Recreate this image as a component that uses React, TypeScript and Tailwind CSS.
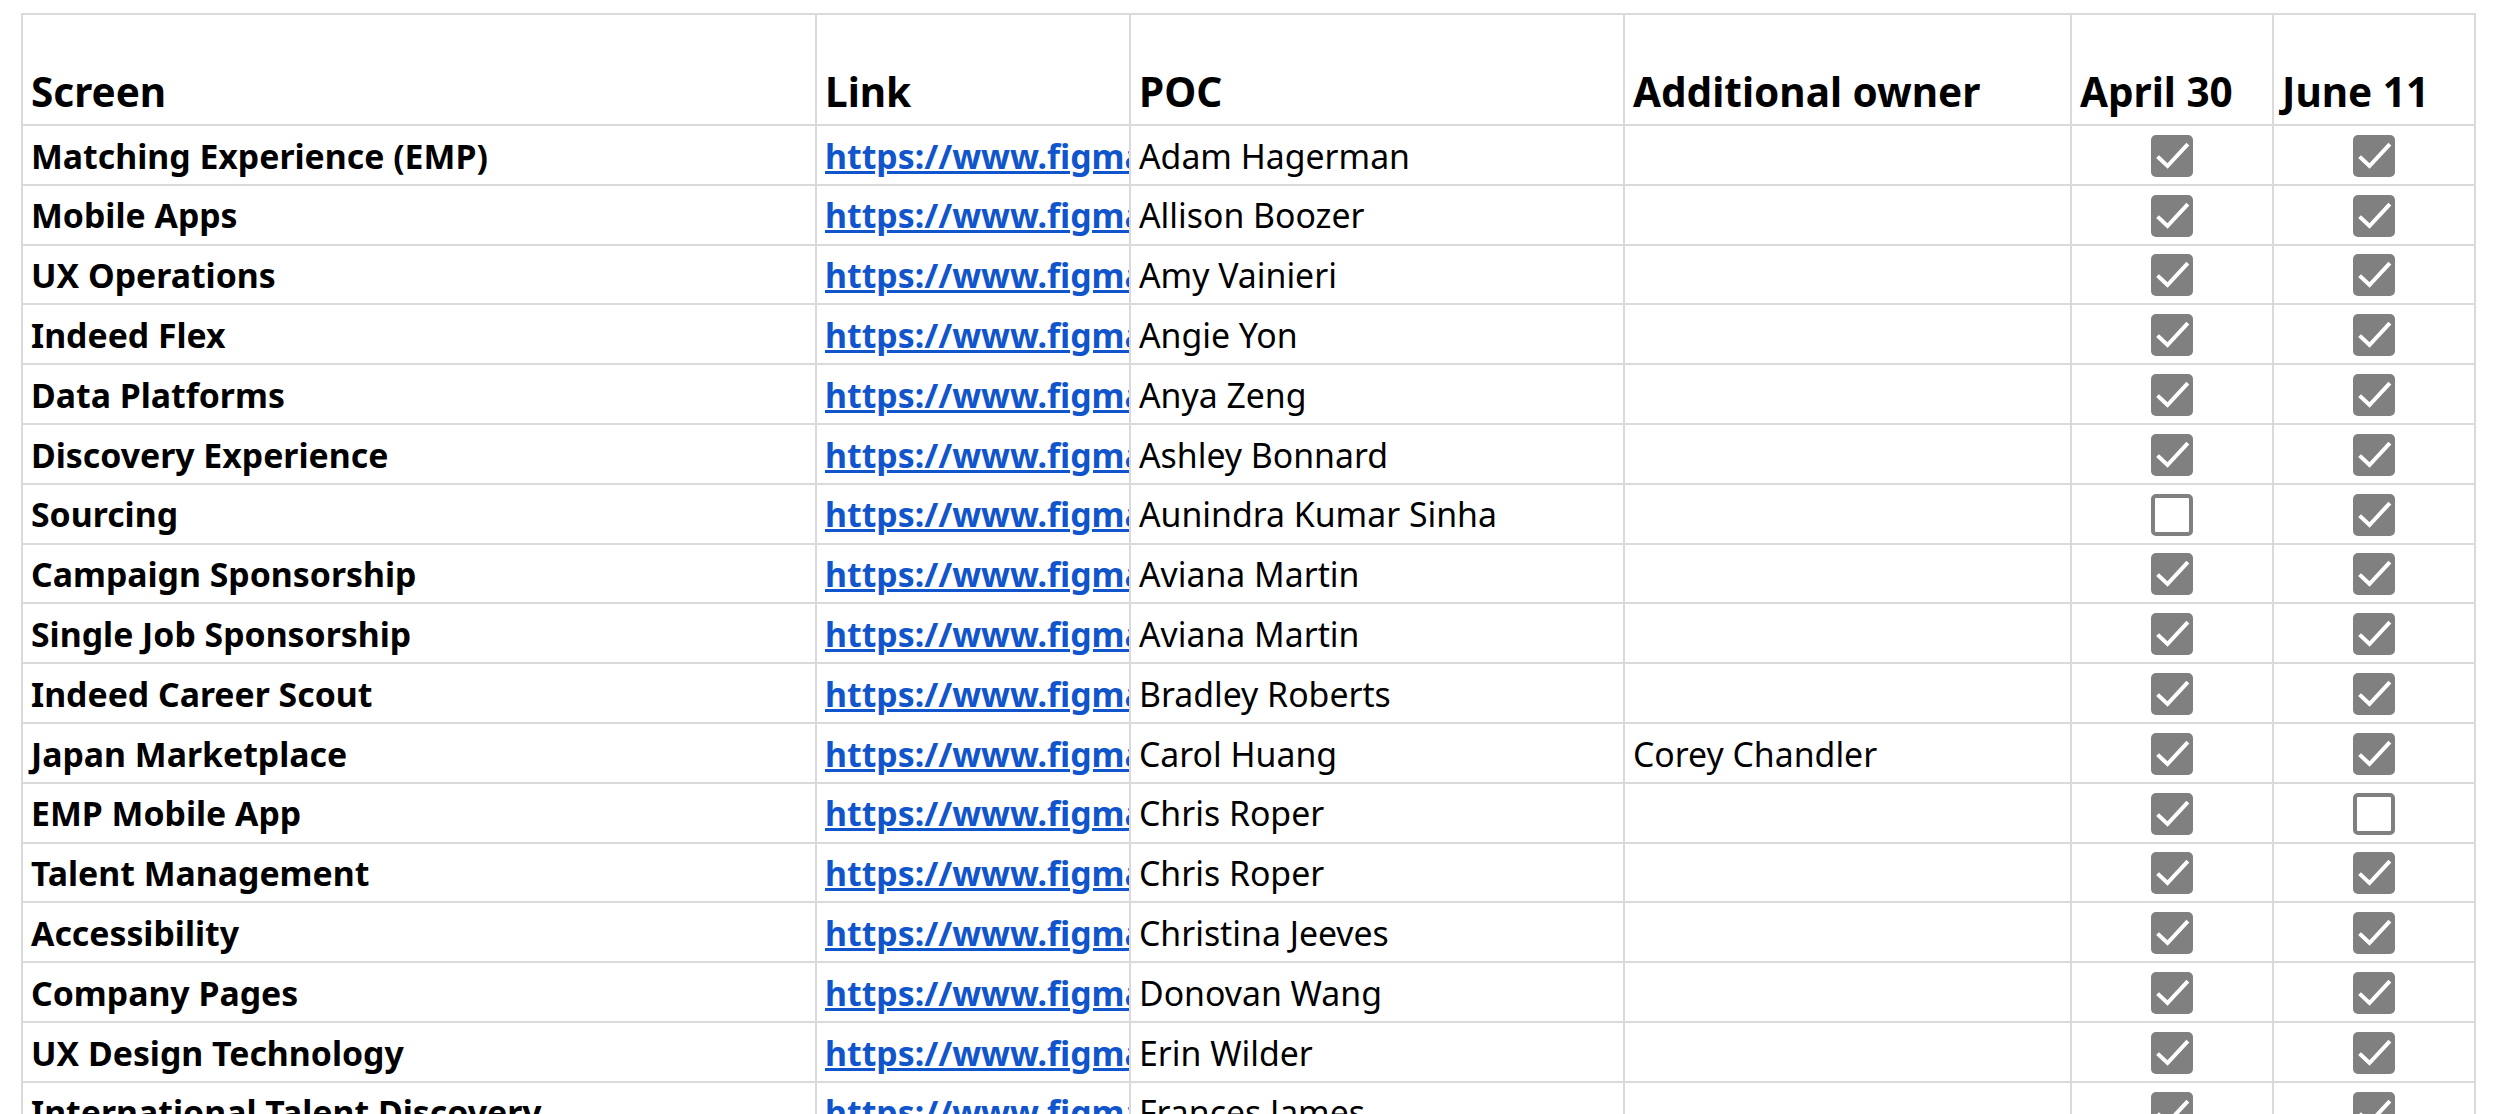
type Row = {
  screen: string;
  poc: string;
  owner?: string;
  april: boolean;
  june: boolean;
};

const rows: Row[] = [
  { screen: "Matching Experience (EMP)", poc: "Adam Hagerman", april: true, june: true },
  { screen: "Mobile Apps", poc: "Allison Boozer", april: true, june: true },
  { screen: "UX Operations", poc: "Amy Vainieri", april: true, june: true },
  { screen: "Indeed Flex", poc: "Angie Yon", april: true, june: true },
  { screen: "Data Platforms", poc: "Anya Zeng", april: true, june: true },
  { screen: "Discovery Experience", poc: "Ashley Bonnard", april: true, june: true },
  { screen: "Sourcing", poc: "Aunindra Kumar Sinha", april: false, june: true },
  { screen: "Campaign Sponsorship", poc: "Aviana Martin", april: true, june: true },
  { screen: "Single Job Sponsorship", poc: "Aviana Martin", april: true, june: true },
  { screen: "Indeed Career Scout", poc: "Bradley Roberts", april: true, june: true },
  { screen: "Japan Marketplace", poc: "Carol Huang", owner: "Corey Chandler", april: true, june: true },
  { screen: "EMP Mobile App", poc: "Chris Roper", april: true, june: false },
  { screen: "Talent Management", poc: "Chris Roper", april: true, june: true },
  { screen: "Accessibility", poc: "Christina Jeeves", april: true, june: true },
  { screen: "Company Pages", poc: "Donovan Wang", april: true, june: true },
  { screen: "UX Design Technology", poc: "Erin Wilder", april: true, june: true },
  { screen: "International Talent Discovery", poc: "Frances James", april: true, june: true },
];

function Checkbox({ checked }: { checked: boolean }) {
  if (!checked) {
    return <div className="w-[42px] h-[42px] rounded-[5px] border-[4px] border-[#808080] bg-white" />;
  }
  return (
    <div className="w-[42px] h-[42px] rounded-[5px] bg-[#808080] flex items-center justify-center">
      <svg width="42" height="42" viewBox="0 0 42 42" fill="none">
        <path d="M8 23 L16.5 31 L35.5 10.5" stroke="white" strokeWidth="4" strokeLinecap="square" />
      </svg>
    </div>
  );
}

const headCell = "bg-white h-[109px] flex items-end px-2 pb-[1px] text-[40.5px] font-bold text-black";
const bodyCell = "bg-white h-[57.8px] flex items-center px-2 pt-[2px] text-[33.8px] text-black whitespace-nowrap overflow-hidden";

export default function App() {
  return (
    <div className="h-screen overflow-hidden bg-white" style={{ fontFamily: '"Noto Sans", "Open Sans", sans-serif' }}>
      <div className="ml-[21px] mt-[13px] w-max grid grid-cols-[792px_312px_492px_445px_200px_200px] gap-[2px] p-[2px] bg-[#dadada]">
        <div className={headCell}>Screen</div>
        <div className={headCell}>Link</div>
        <div className={headCell}>POC</div>
        <div className={headCell}>Additional owner</div>
        <div className={headCell}>April 30</div>
        <div className={headCell}>June 11</div>

        {rows.map((r, i) => (
          <div key={i} className="contents">
            <div className={`${bodyCell} font-bold`}>{r.screen}</div>
            <div className={`${bodyCell} font-bold`}>
              <a href="#" className="text-[#1155cc] underline">
                https://www.figma.com
              </a>
            </div>
            <div className={bodyCell}>{r.poc}</div>
            <div className={bodyCell}>{r.owner ?? ""}</div>
            <div className={`${bodyCell} justify-center pt-0`}>
              <Checkbox checked={r.april} />
            </div>
            <div className={`${bodyCell} justify-center pt-0`}>
              <Checkbox checked={r.june} />
            </div>
          </div>
        ))}
      </div>
    </div>
  );
}
